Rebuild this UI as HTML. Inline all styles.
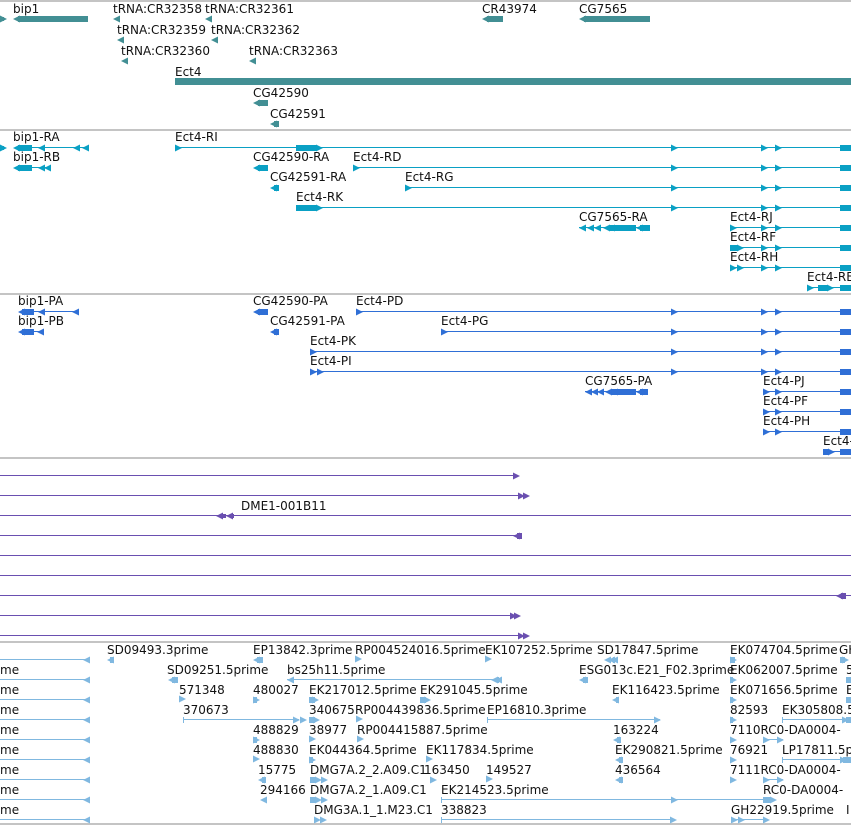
<!DOCTYPE html>
<html><head><meta charset="utf-8">
<style>
html,body{margin:0;padding:0;background:#fff;width:851px;height:825px;overflow:hidden}
svg{display:block}
text{font-family:"DejaVu Sans","Liberation Sans",sans-serif;font-size:12px;fill:#111}
</style></head>
<body>
<svg width="851" height="825" viewBox="0 0 851 825" xmlns="http://www.w3.org/2000/svg">
<defs>
<path id="r" d="M0,-3.5 L7,0 L0,3.5 Z"/>
<path id="l" d="M7,-3.5 L0,0 L7,3.5 Z"/>
</defs>
<g fill="#c4c4c4">
<rect x="0" y="0" width="851" height="2"/>
<rect x="0" y="129" width="851" height="2"/>
<rect x="0" y="293" width="851" height="2"/>
<rect x="0" y="457" width="851" height="2"/>
<rect x="0" y="641" width="851" height="2"/>
<rect x="0" y="823" width="851" height="2"/>
</g>

<g fill="#428f94">
<use href="#r" x="0" y="19"/><rect x="0" y="17" width="4" height="4"/>
<use href="#l" x="13" y="19"/><rect x="18" y="16" width="70" height="6"/>
<use href="#l" x="113" y="19"/>
<use href="#l" x="205" y="19"/>
<use href="#l" x="117" y="40"/>
<use href="#l" x="211" y="40"/>
<use href="#l" x="121" y="61"/>
<use href="#l" x="249" y="61"/>
<use href="#l" x="482" y="19"/><rect x="487" y="16" width="16" height="6"/>
<use href="#l" x="579" y="19"/><rect x="584" y="16" width="66" height="6"/>
<rect x="175" y="78" width="676" height="7"/>
<use href="#l" x="253" y="103"/><rect x="258" y="100" width="10" height="6"/>
<use href="#l" x="270" y="124"/><rect x="274" y="121" width="5" height="6"/>
</g>
<text x="13" y="13">bip1</text>
<text x="113" y="13">tRNA:CR32358</text>
<text x="205" y="13">tRNA:CR32361</text>
<text x="117" y="34">tRNA:CR32359</text>
<text x="211" y="34">tRNA:CR32362</text>
<text x="121" y="55">tRNA:CR32360</text>
<text x="249" y="55">tRNA:CR32363</text>
<text x="482" y="13">CR43974</text>
<text x="579" y="13">CG7565</text>
<text x="175" y="76">Ect4</text>
<text x="253" y="97">CG42590</text>
<text x="270" y="118">CG42591</text>

<g fill="#0aa0c4">
<use href="#r" x="0" y="148"/><rect x="0" y="146" width="4" height="4"/>
<use href="#l" x="13" y="148"/><rect x="18" y="145" width="14" height="6"/><rect x="32" y="147" width="55" height="1"/>
<use href="#l" x="38" y="148"/><use href="#l" x="73" y="148"/><use href="#l" x="82" y="148"/>
<use href="#l" x="13" y="168"/><rect x="18" y="165" width="14" height="6"/><rect x="32" y="167" width="18" height="1"/>
<use href="#l" x="38" y="168"/><use href="#l" x="44" y="168"/>
<rect x="175" y="147" width="676" height="1"/><use href="#r" x="175" y="148"/>
<rect x="296" y="145" width="20" height="6"/><use href="#r" x="316" y="148"/>
<use href="#r" x="671" y="148"/><use href="#r" x="761" y="148"/><use href="#r" x="775" y="148"/><rect x="840" y="145" width="11" height="6"/>
<use href="#l" x="253" y="168"/><rect x="258" y="165" width="10" height="6"/>
<rect x="353" y="167" width="498" height="1"/><use href="#r" x="353" y="168"/>
<use href="#r" x="671" y="168"/><use href="#r" x="761" y="168"/><use href="#r" x="775" y="168"/><rect x="840" y="165" width="11" height="6"/>
<use href="#l" x="270" y="188"/><rect x="274" y="185" width="5" height="6"/>
<rect x="405" y="187" width="446" height="1"/><use href="#r" x="405" y="188"/>
<use href="#r" x="671" y="188"/><use href="#r" x="761" y="188"/><use href="#r" x="775" y="188"/><rect x="840" y="185" width="11" height="6"/>
<rect x="296" y="205" width="20" height="6"/><use href="#r" x="316" y="208"/><rect x="318" y="207" width="533" height="1"/>
<use href="#r" x="671" y="208"/><use href="#r" x="761" y="208"/><use href="#r" x="775" y="208"/><rect x="840" y="205" width="11" height="6"/>
<rect x="579" y="227" width="71" height="1"/>
<use href="#l" x="579" y="228"/><use href="#l" x="587" y="228"/><use href="#l" x="594" y="228"/><use href="#l" x="603" y="228"/><use href="#l" x="608" y="228"/>
<rect x="610" y="225" width="26" height="6"/><use href="#l" x="636" y="228"/><rect x="640" y="225" width="10" height="6"/>
<rect x="730" y="227" width="121" height="1"/><use href="#r" x="730" y="228"/><use href="#r" x="761" y="228"/><use href="#r" x="775" y="228"/><rect x="840" y="225" width="11" height="6"/>
<rect x="730" y="247" width="121" height="1"/><rect x="730" y="245" width="8" height="6"/><use href="#r" x="737" y="248"/><use href="#r" x="761" y="248"/><use href="#r" x="775" y="248"/><rect x="840" y="245" width="11" height="6"/>
<rect x="730" y="267" width="121" height="1"/><use href="#r" x="730" y="268"/><use href="#r" x="737" y="268"/><use href="#r" x="761" y="268"/><use href="#r" x="775" y="268"/><rect x="840" y="265" width="11" height="6"/>
<rect x="807" y="287" width="44" height="1"/><use href="#r" x="807" y="288"/><rect x="818" y="285" width="10" height="6"/><use href="#r" x="827" y="288"/><rect x="840" y="285" width="11" height="6"/>
</g>
<text x="13" y="141">bip1-RA</text>
<text x="13" y="161">bip1-RB</text>
<text x="175" y="141">Ect4-RI</text>
<text x="253" y="161">CG42590-RA</text>
<text x="353" y="161">Ect4-RD</text>
<text x="270" y="181">CG42591-RA</text>
<text x="405" y="181">Ect4-RG</text>
<text x="296" y="201">Ect4-RK</text>
<text x="579" y="221">CG7565-RA</text>
<text x="730" y="221">Ect4-RJ</text>
<text x="730" y="241">Ect4-RF</text>
<text x="730" y="261">Ect4-RH</text>
<text x="807" y="281">Ect4-RE</text>

<g fill="#2f6fd6">
<use href="#l" x="18" y="312"/><rect x="22" y="309" width="12" height="6"/><rect x="34" y="311" width="44" height="1"/>
<use href="#l" x="38" y="312"/><use href="#l" x="72" y="312"/>
<use href="#l" x="18" y="332"/><rect x="22" y="329" width="12" height="6"/><rect x="34" y="331" width="10" height="1"/><use href="#l" x="37" y="332"/>
<use href="#l" x="253" y="312"/><rect x="258" y="309" width="10" height="6"/>
<use href="#l" x="270" y="332"/><rect x="274" y="329" width="5" height="6"/>
<rect x="356" y="311" width="495" height="1"/><use href="#r" x="356" y="312"/>
<use href="#r" x="671" y="312"/><use href="#r" x="761" y="312"/><use href="#r" x="775" y="312"/><rect x="840" y="309" width="11" height="6"/>
<rect x="441" y="331" width="410" height="1"/><use href="#r" x="441" y="332"/>
<use href="#r" x="671" y="332"/><use href="#r" x="761" y="332"/><use href="#r" x="775" y="332"/><rect x="840" y="329" width="11" height="6"/>
<rect x="310" y="351" width="541" height="1"/><use href="#r" x="310" y="352"/>
<use href="#r" x="671" y="352"/><use href="#r" x="761" y="352"/><use href="#r" x="775" y="352"/><rect x="840" y="349" width="11" height="6"/>
<rect x="310" y="371" width="541" height="1"/><use href="#r" x="310" y="372"/><use href="#r" x="317" y="372"/>
<use href="#r" x="671" y="372"/><use href="#r" x="761" y="372"/><use href="#r" x="775" y="372"/><rect x="840" y="369" width="11" height="6"/>
<rect x="585" y="391" width="63" height="1"/>
<use href="#l" x="585" y="392"/><use href="#l" x="591" y="392"/><use href="#l" x="597" y="392"/><use href="#l" x="605" y="392"/><use href="#l" x="611" y="392"/>
<rect x="612" y="389" width="24" height="6"/><use href="#l" x="636" y="392"/><rect x="640" y="389" width="8" height="6"/>
<rect x="763" y="391" width="88" height="1"/><use href="#r" x="763" y="392"/><use href="#r" x="775" y="392"/><rect x="840" y="389" width="11" height="6"/>
<rect x="763" y="411" width="88" height="1"/><use href="#r" x="763" y="412"/><use href="#r" x="775" y="412"/><rect x="840" y="409" width="11" height="6"/>
<rect x="763" y="431" width="88" height="1"/><use href="#r" x="763" y="432"/><use href="#r" x="775" y="432"/><rect x="840" y="429" width="11" height="6"/>
<rect x="823" y="451" width="28" height="1"/><rect x="823" y="449" width="6" height="6"/><use href="#r" x="828" y="452"/><rect x="840" y="449" width="11" height="6"/>
</g>
<text x="18" y="305">bip1-PA</text>
<text x="18" y="325">bip1-PB</text>
<text x="253" y="305">CG42590-PA</text>
<text x="356" y="305">Ect4-PD</text>
<text x="270" y="325">CG42591-PA</text>
<text x="441" y="325">Ect4-PG</text>
<text x="310" y="345">Ect4-PK</text>
<text x="310" y="365">Ect4-PI</text>
<text x="585" y="385">CG7565-PA</text>
<text x="763" y="385">Ect4-PJ</text>
<text x="763" y="405">Ect4-PF</text>
<text x="763" y="425">Ect4-PH</text>
<text x="823" y="445">Ect4-PE</text>

<g fill="#6a4fb0">
<rect x="0" y="475" width="514" height="1"/><use href="#r" x="513" y="476"/>
<rect x="0" y="495" width="520" height="1"/><use href="#r" x="518" y="496"/><use href="#r" x="523" y="496"/>
<rect x="0" y="515" width="851" height="1"/><use href="#l" x="216" y="516"/><rect x="222" y="514" width="4" height="4"/><use href="#l" x="226" y="516"/><rect x="230" y="514" width="4" height="4"/>
<rect x="0" y="535" width="516" height="1"/><use href="#l" x="513" y="536"/><rect x="517" y="533" width="5" height="6"/>
<rect x="0" y="555" width="851" height="1"/>
<rect x="0" y="575" width="851" height="1"/>
<rect x="0" y="595" width="851" height="1"/><use href="#l" x="836" y="596"/><rect x="841" y="593" width="5" height="6"/>
<rect x="0" y="615" width="514" height="1"/><use href="#r" x="510" y="616"/><use href="#r" x="514" y="616"/>
<rect x="0" y="635" width="520" height="1"/><use href="#r" x="518" y="636"/><use href="#r" x="523" y="636"/>
</g>
<text x="241" y="510">DME1-001B11</text>

<g fill="#80b8e0">
<rect x="0" y="659" width="89" height="1"/><use href="#l" x="83" y="660"/>
<rect x="0" y="679" width="89" height="1"/><use href="#l" x="83" y="680"/>
<rect x="0" y="699" width="89" height="1"/><use href="#l" x="83" y="700"/>
<rect x="0" y="719" width="89" height="1"/><use href="#l" x="83" y="720"/>
<rect x="0" y="739" width="89" height="1"/><use href="#l" x="83" y="740"/>
<rect x="0" y="759" width="89" height="1"/><use href="#l" x="83" y="760"/>
<rect x="0" y="779" width="89" height="1"/><use href="#l" x="83" y="780"/>
<rect x="0" y="799" width="89" height="1"/><use href="#l" x="83" y="800"/>
<rect x="0" y="819" width="89" height="1"/><use href="#l" x="83" y="820"/>
<use href="#l" x="107" y="660"/><rect x="110" y="657" width="4" height="6"/>
<use href="#l" x="253" y="660"/><rect x="257" y="657" width="6" height="6"/>
<use href="#r" x="355" y="659"/>
<use href="#r" x="485" y="659"/>
<use href="#l" x="604" y="660"/><use href="#l" x="608" y="660"/><use href="#l" x="611" y="660"/><rect x="613" y="657" width="2" height="6"/>
<use href="#r" x="730" y="660"/><rect x="730" y="657" width="5" height="6"/>
<use href="#r" x="842" y="660"/><rect x="840" y="657" width="5" height="6"/>
<use href="#l" x="168" y="680"/><rect x="172" y="677" width="6" height="6"/>
<rect x="287" y="679" width="210" height="1"/><use href="#l" x="287" y="680"/><use href="#l" x="491" y="680"/><use href="#l" x="495" y="680"/><rect x="497" y="677" width="2" height="6"/>
<use href="#l" x="579" y="680"/><rect x="583" y="677" width="5" height="6"/>
<use href="#r" x="730" y="680"/><rect x="730" y="677" width="3" height="6"/>
<rect x="846" y="677" width="5" height="6"/>
<use href="#r" x="179" y="699"/>
<use href="#r" x="253" y="700"/><rect x="253" y="697" width="4" height="6"/>
<use href="#r" x="312" y="700"/><rect x="309" y="697" width="6" height="6"/>
<use href="#r" x="424" y="700"/><rect x="420" y="697" width="6" height="6"/>
<use href="#l" x="612" y="700"/><rect x="616" y="697" width="3" height="6"/>
<use href="#r" x="730" y="700"/><rect x="730" y="697" width="3" height="6"/>
<rect x="846" y="697" width="5" height="6"/>
<rect x="183" y="719" width="116" height="1"/><rect x="183" y="717" width="1" height="6"/><use href="#r" x="293" y="720"/><use href="#r" x="300" y="720"/>
<rect x="309" y="717" width="6" height="6"/><use href="#r" x="313" y="720"/>
<use href="#r" x="356" y="719"/>
<rect x="487" y="719" width="173" height="1"/><rect x="487" y="717" width="1" height="6"/><use href="#r" x="654" y="720"/>
<use href="#r" x="730" y="720"/><rect x="730" y="717" width="3" height="6"/>
<rect x="782" y="719" width="67" height="1"/><rect x="782" y="717" width="1" height="6"/><use href="#r" x="842" y="720"/><rect x="846" y="717" width="5" height="6"/>
<use href="#r" x="253" y="740"/><rect x="253" y="737" width="4" height="6"/>
<use href="#r" x="309" y="739"/>
<use href="#r" x="357" y="739"/>
<use href="#l" x="613" y="740"/><rect x="617" y="737" width="4" height="6"/>
<use href="#r" x="730" y="740"/>
<rect x="763" y="739" width="20" height="1"/><use href="#r" x="763" y="740"/><use href="#r" x="777" y="740"/>
<use href="#r" x="253" y="759"/>
<use href="#r" x="309" y="760"/><rect x="309" y="757" width="4" height="6"/>
<use href="#r" x="426" y="759"/>
<use href="#l" x="615" y="760"/><rect x="619" y="757" width="4" height="6"/>
<use href="#r" x="730" y="760"/>
<rect x="782" y="759" width="69" height="1"/><rect x="782" y="757" width="1" height="6"/><use href="#r" x="840" y="760"/><rect x="843" y="757" width="8" height="6"/>
<use href="#l" x="258" y="780"/><rect x="262" y="777" width="4" height="6"/>
<rect x="310" y="777" width="5" height="6"/><use href="#r" x="315" y="780"/><use href="#r" x="321" y="780"/>
<use href="#r" x="430" y="780"/>
<use href="#r" x="486" y="779"/>
<use href="#l" x="615" y="780"/><rect x="619" y="777" width="4" height="6"/>
<use href="#r" x="730" y="780"/>
<rect x="763" y="779" width="20" height="1"/><use href="#r" x="763" y="780"/><use href="#r" x="777" y="780"/>
<use href="#l" x="260" y="800"/>
<rect x="310" y="797" width="5" height="6"/><use href="#r" x="315" y="800"/><use href="#r" x="321" y="800"/>
<rect x="441" y="799" width="322" height="1"/><rect x="441" y="797" width="1" height="6"/><use href="#r" x="671" y="800"/>
<rect x="763" y="797" width="8" height="6"/><use href="#r" x="770" y="800"/>
<use href="#r" x="314" y="820"/><use href="#r" x="320" y="820"/>
<rect x="441" y="819" width="234" height="1"/><rect x="441" y="817" width="1" height="6"/><use href="#r" x="670" y="820"/>
<rect x="731" y="819" width="35" height="1"/><use href="#r" x="731" y="820"/><use href="#r" x="738" y="820"/><use href="#r" x="763" y="820"/>
</g>
<g>
<text x="107" y="654">SD09493.3prime</text>
<text x="253" y="654">EP13842.3prime</text>
<text x="355" y="654">RP004524016.5prime</text>
<text x="485" y="654">EK107252.5prime</text>
<text x="597" y="654">SD17847.5prime</text>
<text x="730" y="654">EK074704.5prime</text>
<text x="839" y="654">GH</text>

<text x="0" y="674">me</text>
<text x="167" y="674">SD09251.5prime</text>
<text x="287" y="674">bs25h11.5prime</text>
<text x="579" y="674">ESG013c.E21_F02.3prime</text>
<text x="730" y="674">EK062007.5prime</text>
<text x="846" y="674">5</text>

<text x="0" y="694">me</text>
<text x="179" y="694">571348</text>
<text x="253" y="694">480027</text>
<text x="309" y="694">EK217012.5prime</text>
<text x="420" y="694">EK291045.5prime</text>
<text x="612" y="694">EK116423.5prime</text>
<text x="730" y="694">EK071656.5prime</text>
<text x="846" y="694">E</text>

<text x="0" y="714">me</text>
<text x="183" y="714">370673</text>
<text x="309" y="714">340675</text>
<text x="355" y="714">RP004439836.5prime</text>
<text x="487" y="714">EP16810.3prime</text>
<text x="730" y="714">82593</text>
<text x="782" y="714">EK305808.5</text>

<text x="0" y="734">me</text>
<text x="253" y="734">488829</text>
<text x="309" y="734">38977</text>
<text x="357" y="734">RP004415887.5prime</text>
<text x="613" y="734">163224</text>
<text x="730" y="734">7110RC0-DA0004-</text>

<text x="0" y="754">me</text>
<text x="253" y="754">488830</text>
<text x="309" y="754">EK044364.5prime</text>
<text x="426" y="754">EK117834.5prime</text>
<text x="615" y="754">EK290821.5prime</text>
<text x="730" y="754">76921</text>
<text x="782" y="754">LP17811.5p</text>

<text x="0" y="774">me</text>
<text x="258" y="774">15775</text>
<text x="310" y="774">DMG7A.2_2.A09.C1</text>
<text x="424" y="774">163450</text>
<text x="486" y="774">149527</text>
<text x="615" y="774">436564</text>
<text x="730" y="774">7111RC0-DA0004-</text>

<text x="0" y="794">me</text>
<text x="260" y="794">294166</text>
<text x="310" y="794">DMG7A.2_1.A09.C1</text>
<text x="441" y="794">EK214523.5prime</text>
<text x="763" y="794">RC0-DA0004-</text>

<text x="0" y="814">me</text>
<text x="314" y="814">DMG3A.1_1.M23.C1</text>
<text x="441" y="814">338823</text>
<text x="731" y="814">GH22919.5prime</text>
<text x="846" y="814">I</text>
</g>
</svg>
</body></html>
